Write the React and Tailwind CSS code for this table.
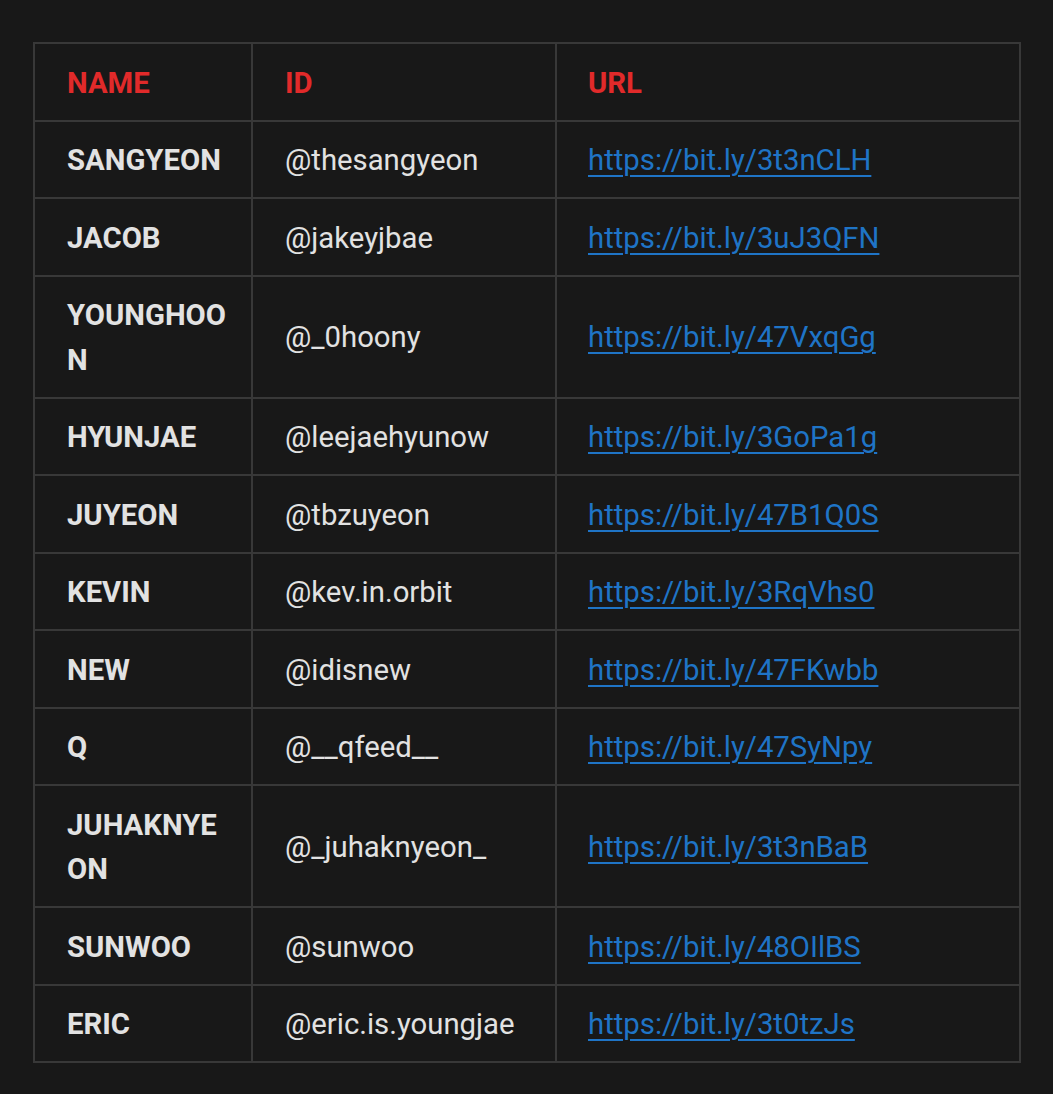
const members = [
  { name: 'SANGYEON', id: '@thesangyeon', url: 'https://bit.ly/3t3nCLH' },
  { name: 'JACOB', id: '@jakeyjbae', url: 'https://bit.ly/3uJ3QFN' },
  { name: 'YOUNGHOON', id: '@_0hoony', url: 'https://bit.ly/47VxqGg' },
  { name: 'HYUNJAE', id: '@leejaehyunow', url: 'https://bit.ly/3GoPa1g' },
  { name: 'JUYEON', id: '@tbzuyeon', url: 'https://bit.ly/47B1Q0S' },
  { name: 'KEVIN', id: '@kev.in.orbit', url: 'https://bit.ly/3RqVhs0' },
  { name: 'NEW', id: '@idisnew', url: 'https://bit.ly/47FKwbb' },
  { name: 'Q', id: '@__qfeed__', url: 'https://bit.ly/47SyNpy' },
  { name: 'JUHAKNYEON', id: '@_juhaknyeon_', url: 'https://bit.ly/3t3nBaB' },
  { name: 'SUNWOO', id: '@sunwoo', url: 'https://bit.ly/48OIlBS' },
  { name: 'ERIC', id: '@eric.is.youngjae', url: 'https://bit.ly/3t0tzJs' },
];

export default function App() {
  return (
    <div className="min-h-[1094px] bg-[#181818] pt-[42px] pl-[33px] font-['Roboto',sans-serif] text-[29.3px] leading-[44.5px]">
      <table className="w-[988px] table-fixed border-collapse">
        <colgroup>
          <col className="w-[218px]" />
          <col className="w-[304px]" />
          <col />
        </colgroup>
        <thead>
          <tr>
            <th className="border-2 border-[#383838] pl-[32px] pr-[18px] pt-[16.5px] pb-[14.5px] text-left font-bold text-[#e12a2a]">NAME</th>
            <th className="border-2 border-[#383838] pl-[32px] pr-[30px] pt-[16.5px] pb-[14.5px] text-left font-bold text-[#e12a2a]">ID</th>
            <th className="border-2 border-[#383838] px-[31px] pt-[16.5px] pb-[14.5px] text-left font-bold text-[#e12a2a]">URL</th>
          </tr>
        </thead>
        <tbody>
          {members.map((m) => (
            <tr key={m.name}>
              <td className="border-2 border-[#383838] pl-[32px] pr-[18px] pt-[16.5px] pb-[14.5px] font-bold text-[#e2e2e2] break-all">{m.name}</td>
              <td className="border-2 border-[#383838] pl-[32px] pr-[30px] pt-[16.5px] pb-[14.5px] text-[#e2e2e2]">{m.id}</td>
              <td className="border-2 border-[#383838] px-[31px] pt-[16.5px] pb-[14.5px]">
                <a href="#" className="text-[#1f74c6] underline underline-offset-[5px] decoration-2">{m.url}</a>
              </td>
            </tr>
          ))}
        </tbody>
      </table>
    </div>
  );
}
